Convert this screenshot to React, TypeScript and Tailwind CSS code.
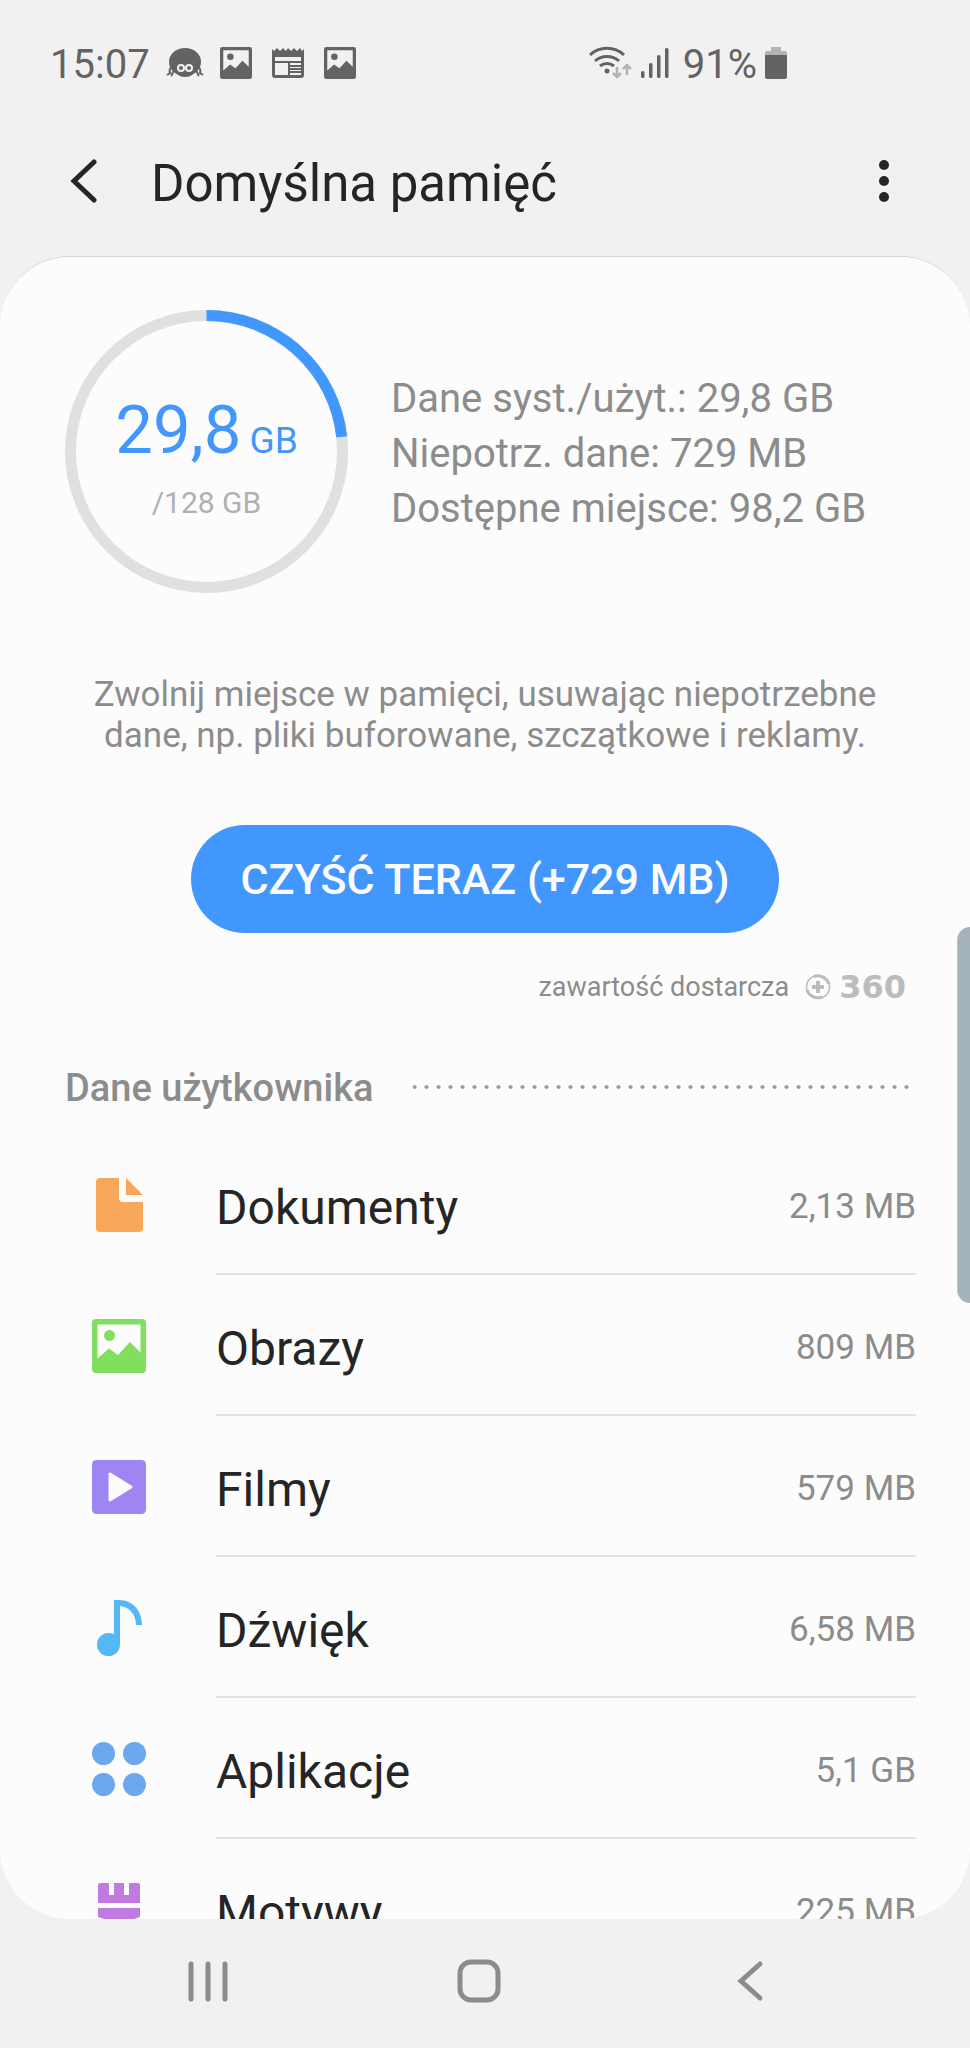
import type { ReactNode } from 'react'

const usedGb = 29.8
const totalGb = 128

function PictureIcon({ className }: { className: string }) {
  return (
    <svg viewBox="0 0 54 54" className={className} fill="currentColor" aria-hidden="true">
      <path
        fillRule="evenodd"
        d="M4 0h46a4 4 0 0 1 4 4v46a4 4 0 0 1-4 4H4a4 4 0 0 1-4-4V4a4 4 0 0 1 4-4Zm1.500 5.500v34L17 29.500l9 6.500 12-13 10.500 10.500v-28Z"
      />
      <circle cx="17.500" cy="16.500" r="5.500" />
    </svg>
  )
}

function DocumentIcon() {
  return (
    <svg viewBox="0 0 54 54" className="size-[54px]" fill="#f9a75b" aria-hidden="true">
      <path d="M7 0h20v20a4 4 0 0 0 4 4h20v26a4 4 0 0 1-4 4H8a4 4 0 0 1-4-4V4a4 4 0 0 1 3-4Z" />
      <path d="M34 0l17 17H34Z" />
    </svg>
  )
}

function MovieIcon() {
  return (
    <svg viewBox="0 0 54 54" className="size-[54px]" aria-hidden="true">
      <rect width="54" height="54" rx="4.500" fill="#9f85f2" />
      <path d="M18 14v26l21-13Z" fill="#fcfcfc" stroke="#fcfcfc" strokeWidth="3" strokeLinejoin="round" />
    </svg>
  )
}

function MusicIcon() {
  return (
    <svg viewBox="0 0 54 56" className="h-14 w-[54px]" aria-hidden="true">
      <circle cx="16.500" cy="44.500" r="11.500" fill="#54b8f7" />
      <path d="M22 0v36h-2v8h8V6c10 1 16 9 16 19h6C50 11 41 0 27 0Z" fill="#54b8f7" />
    </svg>
  )
}

function AppsIcon() {
  return (
    <svg viewBox="0 0 54 54" className="size-[54px]" fill="#6ba8f0" aria-hidden="true">
      <circle cx="11.500" cy="11.500" r="11.500" />
      <circle cx="42.500" cy="11.500" r="11.500" />
      <circle cx="11.500" cy="42.500" r="11.500" />
      <circle cx="42.500" cy="42.500" r="11.500" />
    </svg>
  )
}

function ThemesIcon() {
  return (
    <svg viewBox="0 0 54 54" className="size-[54px]" fill="#c17ae0" aria-hidden="true">
      <path d="M8 0h9v12h5V0h10v12h5V0h9a2 2 0 0 1 2 2v18H6V2a2 2 0 0 1 2-2Z" />
      <path d="M6 25h42v9l-12 4v11a5 5 0 0 1-5 5h-8a5 5 0 0 1-5-5V38L6 34Z" />
    </svg>
  )
}

const categories: { name: string; size: string; icon: ReactNode }[] = [
  { name: 'Dokumenty', size: '2,13 MB', icon: <DocumentIcon /> },
  { name: 'Obrazy', size: '809 MB', icon: <PictureIcon className="size-[54px] text-[#82de5f]" /> },
  { name: 'Filmy', size: '579 MB', icon: <MovieIcon /> },
  { name: 'Dźwięk', size: '6,58 MB', icon: <MusicIcon /> },
  { name: 'Aplikacje', size: '5,1 GB', icon: <AppsIcon /> },
  { name: 'Motywy', size: '225 MB', icon: <ThemesIcon /> },
]

function StatusBar() {
  return (
    <div className="flex h-[108px] shrink-0 items-center justify-between pt-[18px] pl-[50px] pr-[183px] text-[40px] leading-none text-[#636363]">
      <div className="flex items-center gap-5">
        <span className="pt-1">15:07</span>
        <svg viewBox="0 0 38 30" className="-mx-1 h-[30px] w-[38px]" aria-hidden="true">
          <path d="M8 20C4 18 3 22 4 25l-3 2M9 22c-3 1-2 4-4 6M30 20c4-2 5 2 4 5l3 2M29 22c3 1 2 4 4 6" fill="none" stroke="#636363" strokeWidth="2" />
          <ellipse cx="19" cy="14" rx="16" ry="14" fill="#636363" />
          <path d="M8 20c2 6 5 9 11 9s9-3 11-9Z" fill="#636363" />
          <circle cx="15" cy="20" r="3" fill="#636363" stroke="#f1f1f1" strokeWidth="2" />
          <circle cx="23" cy="20" r="3" fill="#636363" stroke="#f1f1f1" strokeWidth="2" />
        </svg>
        <PictureIcon className="size-8" />
        <svg viewBox="0 0 32 30" className="h-[30px] w-8" aria-hidden="true">
          <path
            fillRule="evenodd"
            fill="#636363"
            d="M0 1l2 2 3-3 3 3 3-3 3 3 2-3 3 3 3-3 3 3 3-3 2 3 2-2v26a3 3 0 0 1-3 3H3a3 3 0 0 1-3-3ZM3 9v4h26V9ZM3 15v12h13V15ZM18 15v2h11v-2ZM18 19v1h11v-1ZM18 22v1h11v-1ZM18 25v2h11v-2Z"
          />
        </svg>
        <PictureIcon className="size-8" />
      </div>
      <div className="flex items-center gap-2">
        <svg viewBox="0 0 44 34" className="h-[34px] w-11" fill="none" aria-hidden="true">
          <g stroke="#636363" strokeWidth="3">
            <path d="M1 9a25 25 0 0 1 34 0" />
            <path d="M6 15a18 18 0 0 1 24 0" />
            <path d="M11 20a11 11 0 0 1 14 0" />
          </g>
          <circle cx="18" cy="25" r="2.500" fill="#636363" />
          <path d="M28 21v10M24 27l4 4 4-4M38 29V19M34 23l4-4 4 4" stroke="#b3b3b3" strokeWidth="2.500" />
        </svg>
        <svg viewBox="0 0 28 30" className="mr-[6px] h-[30px] w-7" fill="#636363" aria-hidden="true">
          <rect y="23" width="3.500" height="7" rx="1.500" />
          <rect x="8" y="15" width="3.500" height="15" rx="1.500" />
          <rect x="16" y="7" width="3.500" height="23" rx="1.500" />
          <rect x="24" width="3.500" height="30" rx="1.500" />
        </svg>
        <span className="pt-1">91%</span>
        <svg viewBox="0 0 22 32" className="h-8 w-[22px]" aria-hidden="true">
          <path d="M6 0h10v4h4a2 2 0 0 1 2 2v4H0V6a2 2 0 0 1 2-2h4Z" fill="#b3b3b3" />
          <path d="M0 8h22v22a2 2 0 0 1-2 2H2a2 2 0 0 1-2-2Z" fill="#636363" />
        </svg>
      </div>
    </div>
  )
}

function StorageRing() {
  const radius = 136
  const length = 2 * Math.PI * radius
  const used = (length * usedGb) / totalGb

  return (
    <div className="grid size-[283px] shrink-0 place-items-center">
      <svg viewBox="0 0 283 283" className="col-start-1 row-start-1 size-full" fill="none" strokeWidth="11" aria-hidden="true">
        <circle cx="141.500" cy="141.500" r={radius} stroke="#e0e0e0" />
        <circle
          cx="141.500"
          cy="141.500"
          r={radius}
          stroke="#4297ff"
          strokeDasharray={`${used} ${length}`}
          transform="rotate(-90 141.500 141.500)"
        />
      </svg>
      <div className="col-start-1 row-start-1 flex flex-col items-center gap-1 pt-3">
        <p className="flex items-baseline gap-2 text-[67px] leading-[76px] text-[#4297ff]">
          29,8 <span className="text-[37px]">GB</span>
        </p>
        <p className="text-[30px] leading-10 text-[#b0b0b0]">/128 GB</p>
      </div>
    </div>
  )
}

export default function App() {
  return (
    <div className="relative flex h-screen flex-col bg-[#f1f1f1] font-[family-name:Roboto,sans-serif] text-[#252525]">
      <StatusBar />

      <header className="flex h-[148px] shrink-0 items-center pl-[70px] pr-[72px]">
        <button type="button" aria-label="Wstecz" className="mr-[53px]">
          <svg viewBox="0 0 28 46" className="h-[46px] w-7" fill="none" stroke="#252525" strokeWidth="5" aria-hidden="true">
            <path d="M24 3L4 22l20 19" strokeLinecap="round" />
          </svg>
        </button>
        <h1 className="flex-1 pt-0.5 text-[51px] leading-none">Domyślna pamięć</h1>
        <button type="button" aria-label="Więcej opcji">
          <svg viewBox="0 0 28 44" className="h-11 w-7" fill="#252525" aria-hidden="true">
            <circle cx="14" cy="5" r="5" />
            <circle cx="14" cy="21" r="5" />
            <circle cx="14" cy="37" r="5" />
          </svg>
        </button>
      </header>

      <main className="min-h-0 flex-1 overflow-y-auto rounded-[70px] border-t border-[#d6d6d6] bg-[#fcfcfc] [scrollbar-width:none]">
        {/* Usage summary */}
        <section className="flex items-center gap-[43px] pt-[53px] pl-[65px]">
          <StorageRing />
          <div className="pt-1 text-[40px] leading-[55px] whitespace-nowrap text-[#8c8c8c]">
            <p>Dane syst./użyt.: 29,8 GB</p>
            <p>Niepotrz. dane: 729 MB</p>
            <p>Dostępne miejsce: 98,2 GB</p>
          </div>
        </section>

        {/* Clean up */}
        <section className="flex flex-col items-center pt-[81px]">
          <p className="max-w-[800px] text-center text-[35px] leading-[41px] text-[#8c8c8c]">
            Zwolnij miejsce w pamięci, usuwając niepotrzebne dane, np. pliki buforowane, szczątkowe i reklamy.
          </p>
          <button type="button" className="mt-[69px] h-[108px] rounded-full bg-[#4297ff] px-[50px] text-[43px] font-medium text-[#fcfcfc]">
            CZYŚĆ TERAZ (+729 MB)
          </button>
          <div className="mt-9 flex h-9 items-center gap-4 self-end pr-16 text-[27px] text-[#8c8c8c]">
            <span>zawartość dostarcza</span>
            <span className="flex items-center gap-2 text-[#bcbcbc]">
              <svg viewBox="0 0 26 26" className="size-[26px]" fill="none" stroke="currentColor" aria-hidden="true">
                <circle cx="13" cy="13" r="11.500" strokeWidth="1.500" />
                <path d="M9 2.500C15 0 22 4 24 10M2 16c2 6 9 9 15 7" strokeWidth="3" />
                <path d="M13 7v12M7 13h12" strokeWidth="4" />
              </svg>
              <span className="font-[family-name:'DejaVu_Sans',sans-serif] text-[32px] leading-none font-bold">360</span>
            </span>
          </div>
        </section>

        {/* User data */}
        <section className="pt-[58px]">
          <div className="flex h-12 items-center gap-10 pr-[57px] pl-[65px]">
            <h2 className="pt-0.5 text-[38px] leading-none font-medium text-[#8c8c8c]">Dane użytkownika</h2>
            <div className="h-1 flex-1 bg-[radial-gradient(circle,#9a9a9a_2px,transparent_2px)] bg-[length:12px_4px] bg-right bg-repeat-x" />
          </div>
          <ul className="pt-[23px]">
            {categories.map((category) => (
              <li key={category.name}>
                <button type="button" className="flex h-[141px] w-full items-center gap-[70px] pr-[54px] pl-[92px] text-left">
                  {category.icon}
                  <span className="flex h-full flex-1 items-center justify-between border-b-2 border-[#e3e3e3] pt-2">
                    <span className="text-[48px]">{category.name}</span>
                    <span className="text-[35px] text-[#8c8c8c]">{category.size}</span>
                  </span>
                </button>
              </li>
            ))}
          </ul>
        </section>
      </main>

      {/* Edge panel handle */}
      <div className="absolute top-[927px] right-0 h-[376px] w-[13px] rounded-l-[14px] border-l border-[#bcc6ca] bg-[#a4b3b9]" />

      <nav className="flex h-[129px] shrink-0 items-center justify-around pr-[84px] pb-[6px] pl-[72px] text-[#8c8c8c]">
        <button type="button" aria-label="Ostatnie">
          <svg viewBox="0 0 44 44" className="size-11" fill="none" stroke="currentColor" strokeWidth="5" strokeLinecap="round" aria-hidden="true">
            <path d="M5 5v35M22 5v35M39 5v35" />
          </svg>
        </button>
        <button type="button" aria-label="Ekran główny">
          <svg viewBox="0 0 44 44" className="size-11" fill="none" stroke="currentColor" strokeWidth="5" aria-hidden="true">
            <rect x="3" y="3" width="38" height="38" rx="11" />
          </svg>
        </button>
        <button type="button" aria-label="Wstecz">
          <svg viewBox="0 0 44 44" className="size-11" fill="none" stroke="currentColor" strokeWidth="5" strokeLinecap="round" aria-hidden="true">
            <path d="M32 5L13 22l19 17" />
          </svg>
        </button>
      </nav>
    </div>
  )
}
